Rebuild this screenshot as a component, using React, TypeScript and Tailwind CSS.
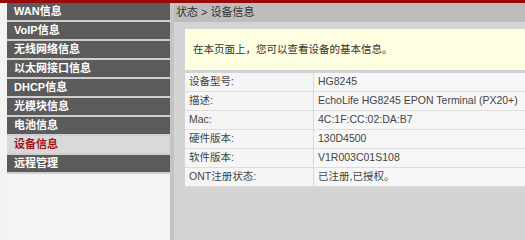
import React from 'react';

const menu = [
  'WAN信息',
  'VoIP信息',
  '无线网络信息',
  '以太网接口信息',
  'DHCP信息',
  '光模块信息',
  '电池信息',
  '设备信息',
  '远程管理',
];

const rows: [string, string][] = [
  ['设备型号:', 'HG8245'],
  ['描述:', 'EchoLife HG8245 EPON Terminal (PX20+)'],
  ['Mac:', '4C:1F:CC:02:DA:B7'],
  ['硬件版本:', '130D4500'],
  ['软件版本:', 'V1R003C01S108'],
  ['ONT注册状态:', '已注册,已授权。'],
];

const font = { fontFamily: '"Liberation Sans", "Noto Sans CJK SC", sans-serif' };

export default function App() {
  return (
    <div className="w-[525px] h-[240px] overflow-hidden bg-[#efefef] flex flex-col" style={font}>
      <div className="h-[3px] bg-[#9a0a0a] shrink-0" />
      <div className="flex flex-1 min-h-0">
        {/* sidebar */}
        <div className="w-[170px] pl-[7px] flex flex-col bg-[#f3f3f3]">
          {menu.map((m) => {
            const active = m === '设备信息';
            return (
              <div
                key={m}
                className={
                  'h-[19px] shrink-0 border-b-2 border-[#cfcfcf] pl-[7px] flex items-center text-[11px] font-bold ' +
                  (active ? 'bg-[#d9d9d9] text-[#a3151a]' : 'bg-[#5b5b5b] text-white')
                }
              >
                {m}
              </div>
            );
          })}
          <div className="flex-1 bg-[#f4f4f4]" />
        </div>
        <div className="w-[4px] bg-[#c4c4c4]" />

        {/* main */}
        <div className="flex-1 flex flex-col bg-[#d4d4d4]">
          <div className="h-[19px] bg-[#bdbdbd] pl-[2px] flex items-center text-[11px] text-[#333]">
            状态 &gt; 设备信息
          </div>
          <div className="pl-[11px] pt-[7px]">
            <div className="h-[41px] bg-[#fefee0] pl-[8px] flex items-center text-[10.5px] text-[#333]">
              在本页面上，您可以查看设备的基本信息。
            </div>
            <div className="mt-[3px] flex flex-col">
              {rows.map(([k, v]) => (
                <div key={k} className="h-[19px] flex border-b border-[#dcdcdc] text-[10.5px] text-[#444] whitespace-nowrap">
                  <div className="w-[129px] bg-[#f5f5f5] pl-[4px] flex items-center border-r border-[#d8d8d8]">{k}</div>
                  <div className="flex-1 bg-[#f7f7f7] pl-[4px] flex items-center">{v}</div>
                </div>
              ))}
            </div>
          </div>
        </div>
      </div>
    </div>
  );
}
